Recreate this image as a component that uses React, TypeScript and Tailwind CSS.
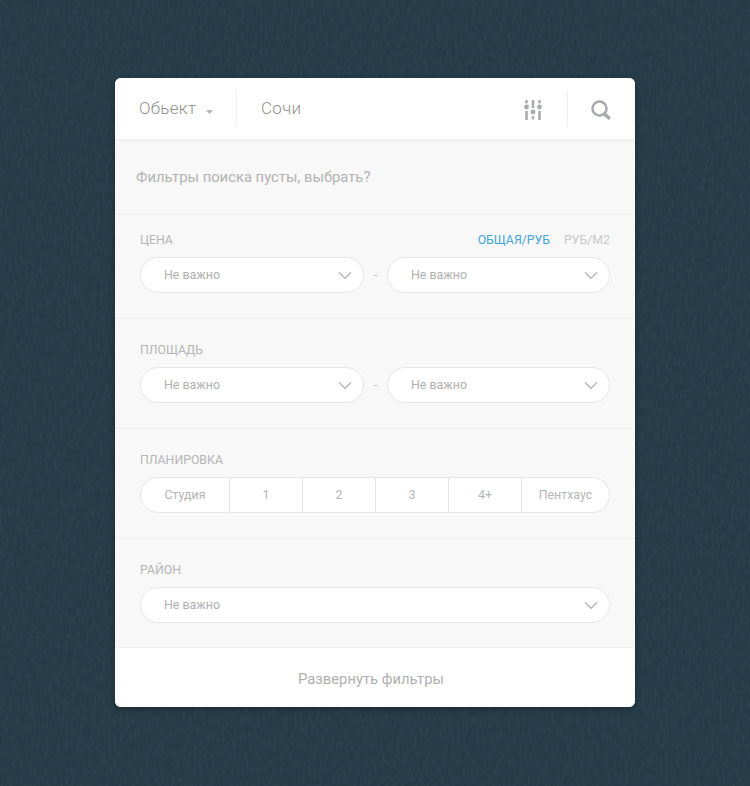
const font = "font-['Roboto',sans-serif]";

const ChevronDown = () => (
  <svg width="14" height="9" viewBox="0 0 14 9" fill="none" className="shrink-0">
    <path d="M1 1.2 L7 7.4 L13 1.2" stroke="#bdbdbd" strokeWidth="1.6" />
  </svg>
);

const Select = ({ className = "" }: { className?: string }) => (
  <div
    className={`flex h-[36px] items-center justify-between rounded-[18px] border border-[#e6e6e6] bg-white pl-[23px] pr-[11px] ${className}`}
  >
    <span className="pt-[1px] text-[12.4px] text-[#b0b0b0]">Не важно</span>
    <ChevronDown />
  </div>
);

const Range = () => (
  <div className="flex items-center">
    <Select className="w-[224px]" />
    <span className="w-[23px] text-center text-[13px] text-[#bdbdbd]">-</span>
    <Select className="w-[223px]" />
  </div>
);

const Label = ({ text }: { text: string }) => (
  <span className="text-[12.3px] leading-[16px] text-[#b5b5b5]">{text}</span>
);

const rooms = [
  { text: "Студия", cls: "w-[90px] rounded-l-[18px] border-l" },
  { text: "1", cls: "w-[73px]" },
  { text: "2", cls: "w-[73px]" },
  { text: "3", cls: "w-[73px]" },
  { text: "4+", cls: "w-[73px]" },
  { text: "Пентхаус", cls: "w-[88px] rounded-r-[18px] border-r" },
];

export default function App() {
  return (
    <div
      className={`relative flex h-[786px] w-full justify-center overflow-hidden bg-[#263b48] pt-[78px] ${font}`}
    >
      {/* grain of the backdrop */}
      <svg className="absolute inset-0 h-full w-full" aria-hidden="true">
        <filter id="grain">
          <feTurbulence type="fractalNoise" baseFrequency="0.35 0.12" numOctaves="3" seed="7" />
          <feColorMatrix values="0 0 0 0 0.08  0 0 0 0 0.14  0 0 0 0 0.18  0 0 0 1.6 -0.6" />
        </filter>
        <rect width="100%" height="100%" filter="url(#grain)" opacity="0.22" />
      </svg>

      <div className="relative h-[629px] w-[520px] overflow-hidden rounded-[6px] bg-[#f8f8f8] shadow-[0_2px_6px_rgba(0,0,0,0.35)]">
        {/* Search bar */}
        <div className="flex h-[62px] items-center border-b border-[#f0f0f0] bg-white shadow-[0_1px_3px_rgba(0,0,0,0.03)]">
          <div className="flex h-[36px] w-[122px] items-center border-r border-[#efefef] pl-[24px]">
            <span className="text-[17px] font-light tracking-[0.3px] text-[#8f8f8f]">Обьект</span>
            <svg width="7" height="4" viewBox="0 0 7 4" className="ml-[10px] mt-[6px]">
              <path d="M0 0 H7 L3.5 4 Z" fill="#b8b8b8" />
            </svg>
          </div>
          <span className="ml-[24px] flex-1 text-[17px] font-light tracking-[0.3px] text-[#8f8f8f]">Сочи</span>
          <svg width="18" height="20" viewBox="0 0 18 20" className="mr-[25px] mt-[2px]" fill="#a9abae">
            <rect x="1.2" y="0" width="2.6" height="3.5" rx="1" />
            <circle cx="2.5" cy="7" r="2.4" />
            <rect x="1.2" y="11" width="2.6" height="9" />
            <rect x="7.7" y="0" width="2.6" height="8" />
            <circle cx="9" cy="12" r="2.4" />
            <rect x="7.7" y="16" width="2.6" height="3.5" rx="1" />
            <rect x="14.2" y="0" width="2.6" height="3.5" rx="1" />
            <circle cx="15.5" cy="7" r="2.4" />
            <rect x="14.2" y="11" width="2.6" height="9" />
          </svg>
          <div className="flex h-[36px] w-[68px] items-center justify-center border-l border-[#efefef] pr-[2px]">
            <svg width="20" height="20" viewBox="0 0 20 20" fill="none" className="mt-[3px]">
              <circle cx="8.5" cy="8.5" r="7" stroke="#a9abae" strokeWidth="2.6" />
              <path d="M13.5 14 L17.6 17.8" stroke="#a9abae" strokeWidth="3.6" strokeLinecap="round" />
            </svg>
          </div>
        </div>

        {/* Empty filters notice */}
        <div className="flex h-[75px] items-center border-b border-[#f0f0f0] pl-[21px]">
          <span className="text-[14.8px] text-[#b3b3b3]">Фильтры поиска пусты, выбрать?</span>
        </div>

        {/* Price */}
        <section className="flex h-[104px] flex-col gap-[9px] border-b border-[#f0f0f0] px-[25px] pt-[17px]">
          <div className="flex items-center justify-between">
            <Label text="ЦЕНА" />
            <div className="flex gap-[14px] text-[12.3px] leading-[16px]">
              <span className="text-[#45a5d8]">ОБЩАЯ/РУБ</span>
              <span className="text-[#c8c8c8]">РУБ/М2</span>
            </div>
          </div>
          <Range />
        </section>

        {/* Area */}
        <section className="flex h-[110px] flex-col gap-[9px] border-b border-[#f0f0f0] px-[25px] pt-[23px]">
          <Label text="ПЛОЩАДЬ" />
          <Range />
        </section>

        {/* Layout */}
        <section className="flex h-[110px] flex-col gap-[9px] border-b border-[#f0f0f0] px-[25px] pt-[23px]">
          <Label text="ПЛАНИРОВКА" />
          <div className="flex h-[36px]">
            {rooms.map((r) => (
              <div
                key={r.text}
                className={`flex items-center justify-center border-y border-r border-[#e6e6e6] bg-white pt-[1px] text-[12.4px] text-[#b5b5b5] ${r.cls}`}
              >
                {r.text}
              </div>
            ))}
          </div>
        </section>

        {/* District */}
        <section className="flex h-[109px] flex-col gap-[9px] border-b border-[#f0f0f0] px-[25px] pt-[23px]">
          <Label text="РАЙОН" />
          <Select className="w-[470px]" />
        </section>

        {/* Footer */}
        <div className="flex h-[59px] items-center justify-center bg-white pr-[8px] pt-[3px]">
          <span className="text-[14.8px] text-[#b0b0b0]">Развернуть фильтры</span>
        </div>
      </div>
    </div>
  );
}
